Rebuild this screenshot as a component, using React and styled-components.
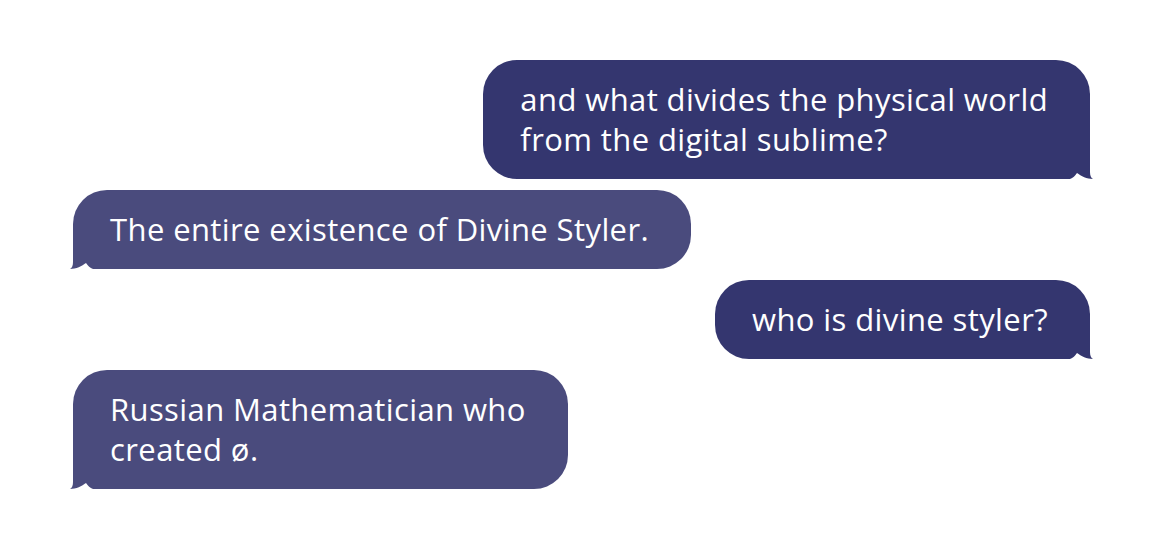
import React from 'react';
import styled, { createGlobalStyle } from 'styled-components';

const GlobalStyle = createGlobalStyle`
  html, body {
    margin: 0;
    padding: 0;
    background: #ffffff;
  }
  body {
    font-family: 'Open Sans', 'Noto Sans', sans-serif;
  }
`;

const Thread = styled.div`
  width: 1172px;
  height: 544px;
  box-sizing: border-box;
  padding: 60px 82px 0 73px;
  display: flex;
  flex-direction: column;
  gap: 11px;
`;

const Row = styled.div`
  display: flex;
  justify-content: ${props => (props.mine ? 'flex-end' : 'flex-start')};
`;

const Bubble = styled.div`
  position: relative;
  padding: 19px 42px 20px 37px;
  border-radius: 34px;
  background: ${props => (props.mine ? '#34366f' : '#4a4b7d')};
  color: #ffffff;
  font-size: 31px;
  line-height: 40px;
  font-weight: 500;
  letter-spacing: 0.4px;
`;

// iMessage-like tail drawn over the bottom corner of the bubble
const Tail = styled.svg`
  position: absolute;
  bottom: 0;
  width: 40px;
  height: 34px;
  ${props => (props.mine ? 'right: -4px;' : 'left: -4px; transform: scaleX(-1);')}
`;

const BubbleTail = ({ mine, color }) => (
  <Tail mine={mine} viewBox="0 0 40 34">
    <path
      d="M0 0 H36 V27 C36 30.5 37 33 39 34 C33 34 27 31 23 28 C21 31 19 33 16 34 H0 Z"
      fill={color}
    />
  </Tail>
);

const messages = [
  { mine: true, text: ['and what divides the physical world', 'from the digital sublime?'] },
  { mine: false, text: ['The entire existence of Divine Styler.'] },
  { mine: true, text: ['who is divine styler?'] },
  { mine: false, text: ['Russian Mathematician who', 'created ø.'] },
];

const App = () => (
  <>
    <GlobalStyle />
    <Thread>
      {messages.map((m, i) => (
        <Row key={i} mine={m.mine}>
          <Bubble mine={m.mine}>
            {m.text.map((line, j) => (
              <div key={j}>{line}</div>
            ))}
            <BubbleTail mine={m.mine} color={m.mine ? '#34366f' : '#4a4b7d'} />
          </Bubble>
        </Row>
      ))}
    </Thread>
  </>
);

export default App;
